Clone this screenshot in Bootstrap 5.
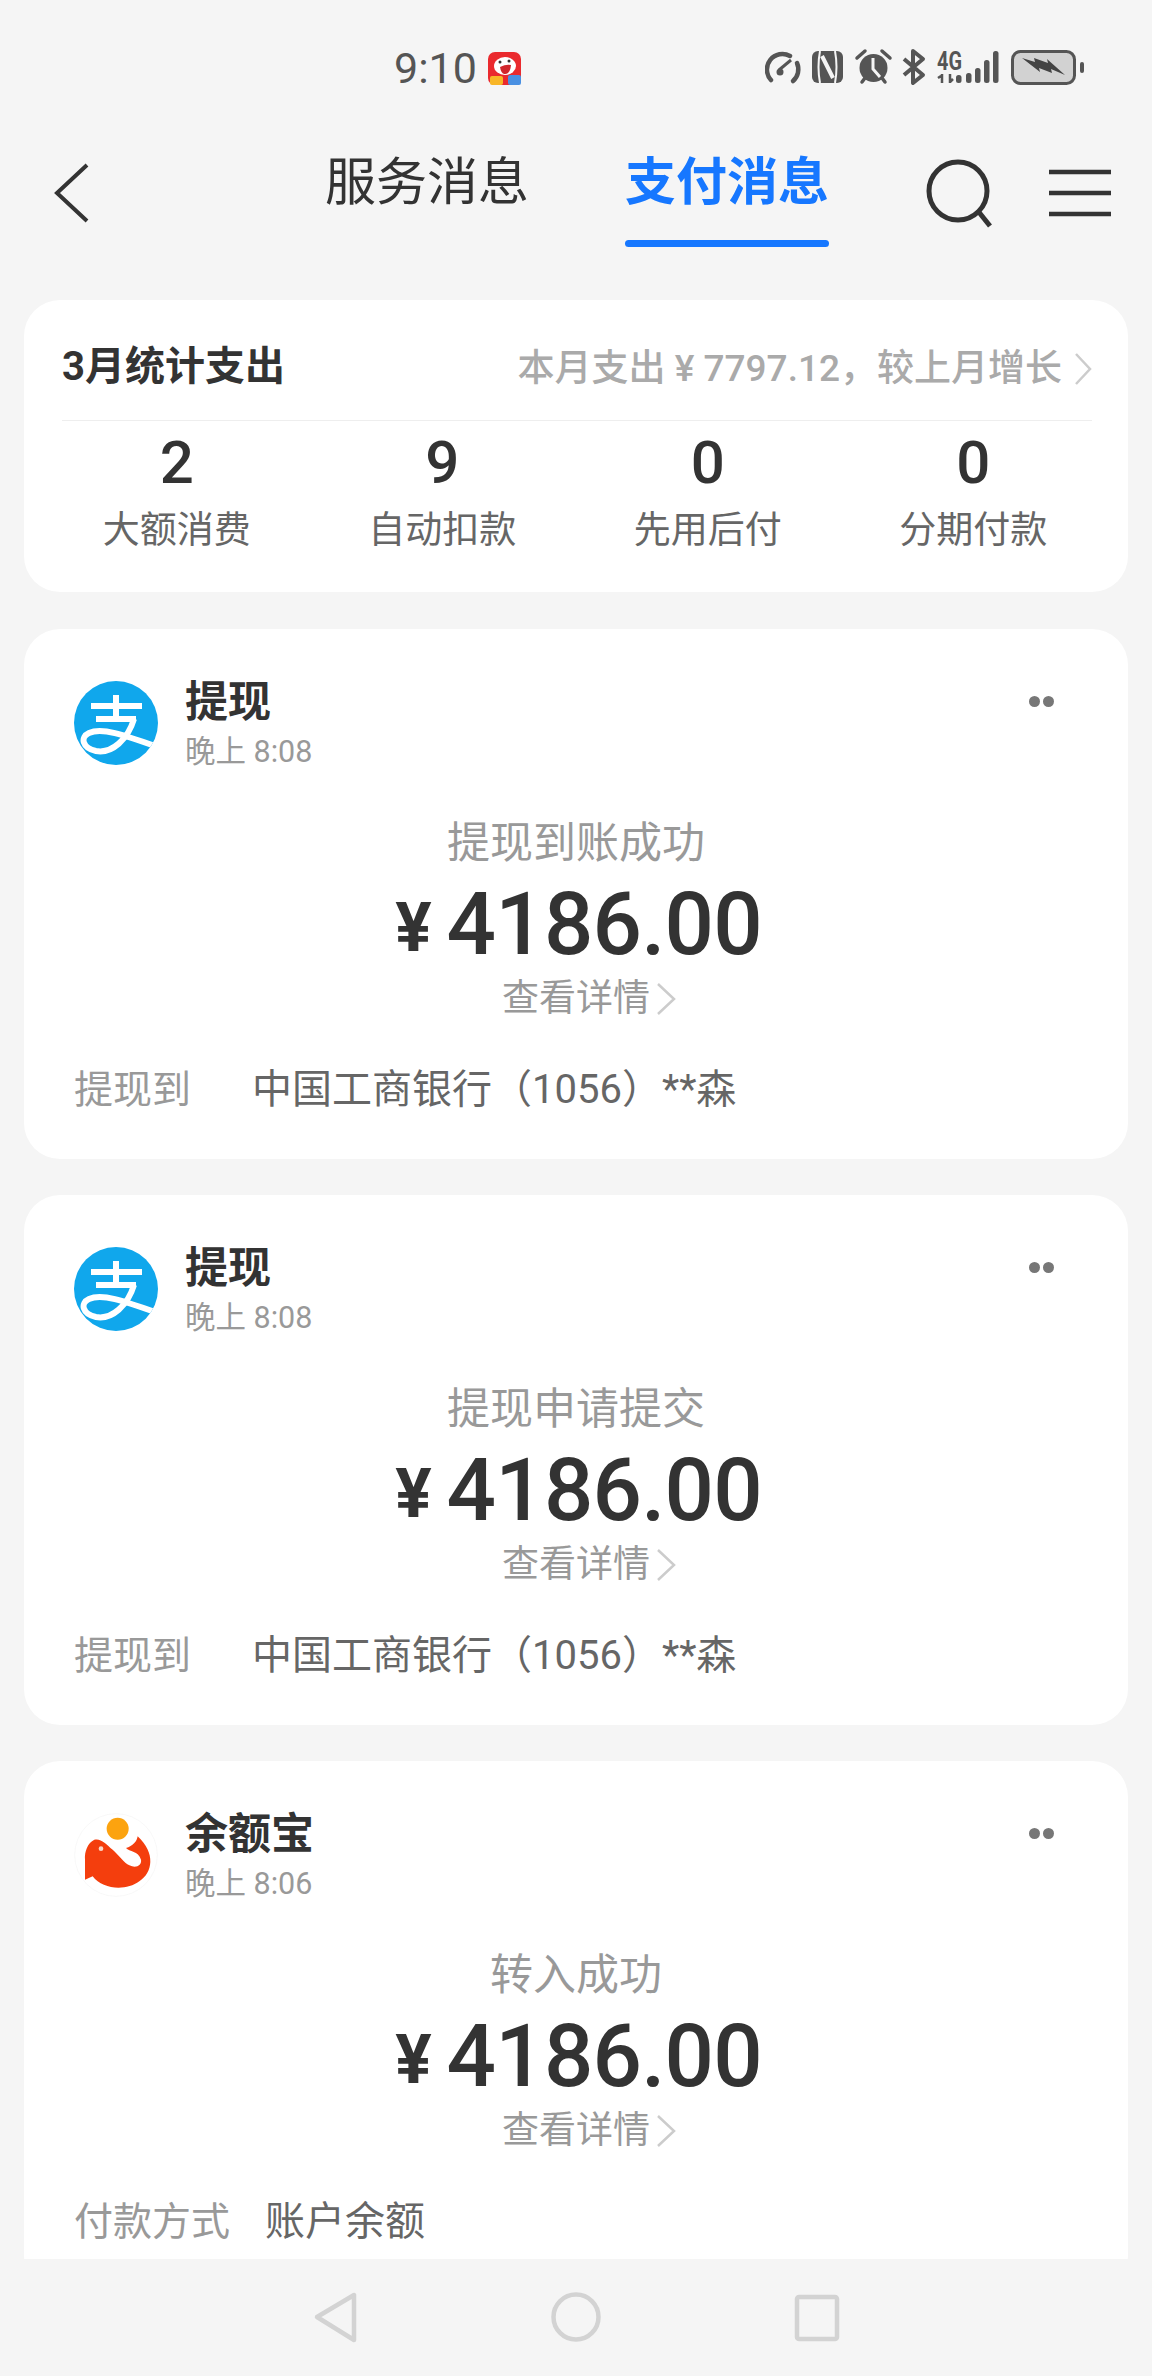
<!DOCTYPE html>
<html lang="zh">
<head>
<meta charset="utf-8">
<title>支付消息</title>
<link href="https://cdn.jsdelivr.net/npm/bootstrap@5.3.0/dist/css/bootstrap.min.css" rel="stylesheet">
<style>
html,body{height:100%;margin:0}
body{font-family:Roboto,"Noto Sans CJK SC",sans-serif;background:#f5f5f5;color:#333}
.pg{height:2376px;width:1152px}
.stat{height:100px;padding-top:50px;color:#555}
.clock{font-size:43px;line-height:36px;margin-left:394px;width:94px;font-weight:400}
.appic{width:33px;height:33px;margin-top:2px}
.sicons{margin-left:244px;margin-top:-10px}
.hdr{height:140px;padding-top:46px}
.hdr svg{display:block}
.backic{margin-left:54px}
.tabx{font-size:51px;line-height:70px;width:204px;text-align:center;color:#333}
.tabx.on{color:#1677ff;font-weight:700;position:relative}
.tabx.on::after{content:"";position:absolute;left:0;right:0;top:92px;height:7px;border-radius:4px;background:#1677ff}
.tabs{margin-left:235px;gap:96px;margin-top:-20px}
.srchic{margin-left:97px}
.menuic{margin-left:55px}
.sheet{border:0;border-radius:36px;background:#fff;margin:0 24px 36px}
.sumc{height:292px;padding:0 36px 0 38px;margin-top:60px;margin-bottom:37px}
.sumtop{height:121px;padding-top:40px;border-bottom:1px solid #eee}
.sumtitle{font-size:40px;font-weight:700;line-height:54px;color:#333}
.sumnote{font-size:37px;font-weight:500;line-height:54px;color:#aaa;margin-top:2px}
.sumnote svg{margin-left:12px}
.statsrow{margin:0 -14px 0 -18px}
.statnum{font-size:60px;line-height:70px;font-weight:500;color:#333}
.statlab{font-size:37px;line-height:50px;color:#666;margin-top:8px}
.statcol{padding-top:7px}
.paycard{height:530px;padding:45px 50px 0 50px;flex:none}
.paytitle{font-size:43px;font-weight:700;line-height:56px;color:#333}
.paytime{font-size:30.500px;line-height:44px;color:#999}
.payic{width:84px;height:84px;margin-top:7px;margin-right:27px}
.dots{margin:22px 0 0 auto;gap:3px;padding-right:24px;height:16px}
.dotx{width:11px;height:11px;border-radius:50%;background:#777}
.paystatus{font-size:43px;line-height:60px;color:#999;margin-top:39px}
.amt{height:102px;color:#333;gap:15px;padding-left:5px}
.yen{font-size:68px;font-weight:700;line-height:1;margin-top:8px}
.num{font-size:87px;font-weight:500;line-height:102px;letter-spacing:-.8px}
.more{font-size:37px;line-height:46px;color:#999;padding-left:26px;margin-top:1px}
.more svg{margin-left:6px}
.rowx{font-size:40px;line-height:56px;margin-top:40px}
.lab{color:#999;font-size:39px}
.lab3{width:178px}
.lab4{width:191px}
.val{color:#666}
.mainx{flex:1 1 auto;overflow:hidden;min-height:0;background:#f5f5f5}
.navb{height:117px;flex:none;background:#f5f5f5}
</style>
</head>
<body>
<div class="pg d-flex flex-column">
  <div class="mainx">
    <div class="stat d-flex align-items-start">
      <div class="clock">9:10</div>
      <svg class="appic" viewBox="0 0 33 33">
        <rect width="33" height="33" rx="7" fill="#ea2a2e"/>
        <rect x="2" y="24" width="13" height="9" rx="2" fill="#f8b627"/>
        <rect x="20" y="23" width="13" height="10" rx="2" fill="#4a90e2"/>
        <ellipse cx="17" cy="14" rx="11" ry="9" fill="#fff"/>
        <path d="M12 15 Q18 12 23 13 Q22 23 16 22 Q13 21 12 15Z" fill="#d0262c"/>
        <circle cx="12" cy="10" r="1.500" fill="#333"/><circle cx="21" cy="9" r="1.500" fill="#333"/>
      </svg>
      <div class="sicons d-flex">
        <svg width="320" height="46" viewBox="765 40 320 46">
          <g fill="none" stroke="#555" stroke-width="4.500" stroke-linecap="round">
            <path d="M771 80 A15.500 15.500 0 0 1 790 56"/>
            <path d="M797 63 A15.500 15.500 0 0 1 793 81"/>
          </g>
          <path d="M779 70 L791 60" stroke="#555" stroke-width="3"/>
          <circle cx="780" cy="72" r="3.500" fill="#555"/>
          <rect x="812" y="51" width="31" height="32" rx="6" fill="#555"/>
          <g fill="none" stroke="#f5f5f5" stroke-width="2">
            <path d="M820 51 Q817 67 820 83"/><path d="M835 51 Q838 67 835 83"/>
            <path d="M822 56 L833 78" stroke-width="4"/>
          </g>
          <circle cx="873.500" cy="68" r="14" fill="#555"/>
          <path d="M873 58 V69 L880 77" fill="none" stroke="#f5f5f5" stroke-width="3"/>
          <path d="M857 58 L865 51 M890 58 L882 51 M862 82 L865 78 M885 82 L882 78" stroke="#555" stroke-width="3.500" stroke-linecap="round"/>
          <path d="M904 59 L923 75 L913 83 V51 L923 59 L904 75" fill="none" stroke="#555" stroke-width="4" stroke-linejoin="round"/>
          <text x="937" y="70" font-family="Roboto,sans-serif" font-size="25" font-weight="700" fill="#555" textLength="25" lengthAdjust="spacingAndGlyphs">4G</text>
          <path d="M942 83 V74 M941 76 L938 78 M950 74 V83 M950 82 L953 79" stroke="#555" stroke-width="2.500" fill="none"/>
          <g fill="#555">
            <rect x="956" y="75" width="5.500" height="8" rx="2.500"/>
            <rect x="966" y="73" width="5.500" height="10" rx="2.500"/>
            <rect x="975" y="68" width="5.500" height="15" rx="2.500"/>
            <rect x="984" y="60" width="5.500" height="23" rx="2.500"/>
            <rect x="993" y="51" width="5.500" height="32" rx="2.500"/>
          </g>
          <rect x="1012.500" y="51.500" width="62" height="32" rx="8" fill="#d2d2d2" stroke="#555" stroke-width="3"/>
          <path d="M1022 58 L1035 62 L1034 58 L1048 63 L1047 59 L1065 75 L1051 69 L1052 73 L1039 68 L1040 72Z" fill="#444"/>
          <rect x="1080" y="62" width="4" height="11" rx="2" fill="#555"/>
        </svg>
      </div>
    </div>
    <div class="hdr d-flex align-items-center">
      <svg class="backic" width="36" height="62" viewBox="0 0 36 62"><path d="M33 3 L3 31 L33 59" fill="none" stroke="#333" stroke-width="4"/></svg>
      <div class="tabs d-flex">
        <div class="tabx">服务消息</div>
        <div class="tabx on">支付消息</div>
      </div>
      <svg class="srchic" width="68" height="70" viewBox="0 0 68 70"><circle cx="32" cy="33" r="29" fill="none" stroke="#333" stroke-width="5"/><path d="M52 53 L64 68" stroke="#333" stroke-width="5"/></svg>
      <svg class="menuic" width="62" height="48" viewBox="0 0 62 48"><path d="M0 3 H62 M0 24 H62 M0 45 H62" stroke="#333" stroke-width="4.500"/></svg>
    </div>
    <div class="card sheet sumc">
      <div class="sumtop d-flex justify-content-between align-items-start">
        <div class="sumtitle">3月统计支出</div>
        <div class="sumnote d-flex align-items-center">本月支出 ¥ 7797.12，较上月增长
          <svg width="18" height="34" viewBox="0 0 18 34"><path d="M2 2 L16 17 L2 32" fill="none" stroke="#ccc" stroke-width="2.500"/></svg>
        </div>
      </div>
      <div class="row g-0 text-center statsrow">
        <div class="col-3 statcol"><div class="statnum">2</div><div class="statlab">大额消费</div></div>
        <div class="col-3 statcol"><div class="statnum">9</div><div class="statlab">自动扣款</div></div>
        <div class="col-3 statcol"><div class="statnum">0</div><div class="statlab">先用后付</div></div>
        <div class="col-3 statcol"><div class="statnum">0</div><div class="statlab">分期付款</div></div>
      </div>
    </div>

    <div class="card sheet paycard">
      <div class="d-flex align-items-start">
        <svg class="payic" viewBox="0 0 84 84"><defs><clipPath id="ca"><circle cx="42" cy="42" r="42"/></clipPath></defs><circle cx="42" cy="42" r="42" fill="#10a7ec"/><g clip-path="url(#ca)" fill="none" stroke="#fff" stroke-width="6"><path d="M17 25 H68 M22 38 H62 M42 14 V38"/><path d="M60 38 C54 58 38 73 22 70 C8 67 6 56 15 52 C28 46 50 54 84 66"/></g></svg>
        <div><div class="paytitle">提现</div><div class="paytime">晚上 8:08</div></div>
        <div class="dots d-flex"><span class="dotx"></span><span class="dotx"></span></div>
      </div>
      <div class="paystatus text-center">提现到账成功</div>
      <div class="amt d-flex justify-content-center align-items-center"><span class="yen">¥</span><span class="num">4186.00</span></div>
      <div class="more d-flex justify-content-center align-items-center">查看详情<svg width="20" height="34" viewBox="0 0 20 34"><path d="M2 2 L18 17 L2 32" fill="none" stroke="#ccc" stroke-width="2.500"/></svg></div>
      <div class="rowx d-flex align-items-center"><span class="lab lab3">提现到</span><span class="val">中国工商银行（1056）**森</span></div>
    </div>

    <div class="card sheet paycard">
      <div class="d-flex align-items-start">
        <svg class="payic" viewBox="0 0 84 84"><defs><clipPath id="cb"><circle cx="42" cy="42" r="42"/></clipPath></defs><circle cx="42" cy="42" r="42" fill="#10a7ec"/><g clip-path="url(#cb)" fill="none" stroke="#fff" stroke-width="6"><path d="M17 25 H68 M22 38 H62 M42 14 V38"/><path d="M60 38 C54 58 38 73 22 70 C8 67 6 56 15 52 C28 46 50 54 84 66"/></g></svg>
        <div><div class="paytitle">提现</div><div class="paytime">晚上 8:08</div></div>
        <div class="dots d-flex"><span class="dotx"></span><span class="dotx"></span></div>
      </div>
      <div class="paystatus text-center">提现申请提交</div>
      <div class="amt d-flex justify-content-center align-items-center"><span class="yen">¥</span><span class="num">4186.00</span></div>
      <div class="more d-flex justify-content-center align-items-center">查看详情<svg width="20" height="34" viewBox="0 0 20 34"><path d="M2 2 L18 17 L2 32" fill="none" stroke="#ccc" stroke-width="2.500"/></svg></div>
      <div class="rowx d-flex align-items-center"><span class="lab lab3">提现到</span><span class="val">中国工商银行（1056）**森</span></div>
    </div>

    <div class="card sheet paycard">
      <div class="d-flex align-items-start">
        <svg class="payic" viewBox="39 105 252 252"><circle cx="165" cy="231" r="124" fill="#fff" stroke="#f4f4f4" stroke-width="2"/><circle cx="170" cy="152" r="33" fill="#fca30f"/><path d="M100 185 C80 195 70 220 72 245 L72 305 L95 295 C125 335 195 340 235 310 C275 285 285 225 230 175 C228 190 215 205 195 210 C205 222 232 218 240 245 C243 262 225 272 205 262 C190 255 172 230 155 215 C135 198 120 180 100 185Z" fill="#f43e0d"/><circle cx="120" cy="212" r="7" fill="#fbd8c8"/></svg>
        <div><div class="paytitle">余额宝</div><div class="paytime">晚上 8:06</div></div>
        <div class="dots d-flex"><span class="dotx"></span><span class="dotx"></span></div>
      </div>
      <div class="paystatus text-center">转入成功</div>
      <div class="amt d-flex justify-content-center align-items-center"><span class="yen">¥</span><span class="num">4186.00</span></div>
      <div class="more d-flex justify-content-center align-items-center">查看详情<svg width="20" height="34" viewBox="0 0 20 34"><path d="M2 2 L18 17 L2 32" fill="none" stroke="#ccc" stroke-width="2.500"/></svg></div>
      <div class="rowx d-flex align-items-center"><span class="lab lab4">付款方式</span><span class="val">账户余额</span></div>
    </div>
  </div>
  <div class="navb d-flex">
    <svg width="1152" height="117" viewBox="0 2259 1152 117">
      <g fill="none" stroke="#d3d3d3" stroke-width="4.500" stroke-linejoin="round">
        <path d="M354 2295 V2340 L317 2317Z"/>
        <circle cx="576" cy="2317" r="22.500"/>
        <rect x="797" y="2297" width="40" height="42" rx="2"/>
      </g>
    </svg>
  </div>
</div>
<script src="https://cdn.jsdelivr.net/npm/bootstrap@5.3.0/dist/js/bootstrap.bundle.min.js"></script>
</body>
</html>
